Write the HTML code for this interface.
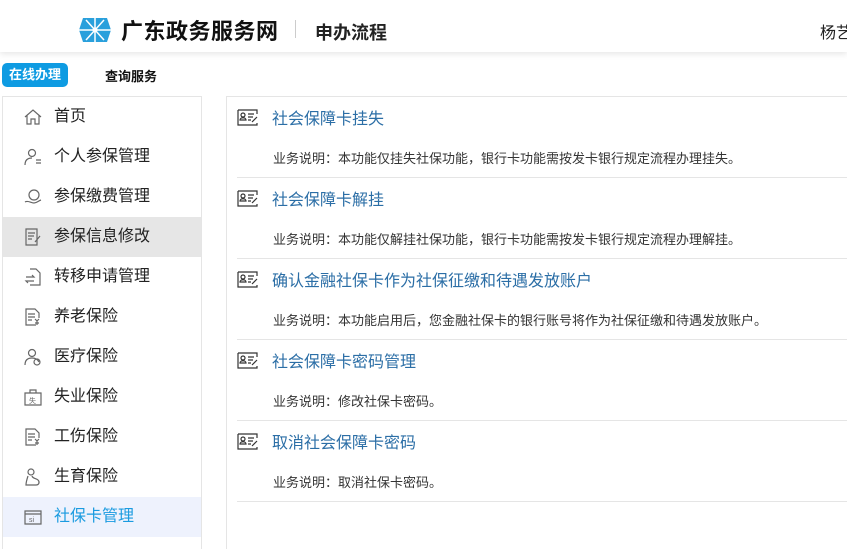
<!DOCTYPE html>
<html><head><meta charset="utf-8"><style>
*{margin:0;padding:0;box-sizing:border-box}
html,body{width:847px;height:549px;overflow:hidden}
body{background:#fff;font-family:"Liberation Sans","Noto Sans CJK SC",sans-serif;color:#333;position:relative}
.hdr{position:absolute;left:0;top:0;width:847px;height:52px;background:#fff;box-shadow:0 2px 6px rgba(0,0,0,.1)}
.t1{position:absolute;left:121px;top:14px;font-size:22px;font-weight:bold;color:#111;letter-spacing:0.5px}
.sep{position:absolute;left:295px;top:20px;width:1px;height:18px;background:#ccc}
.t2{position:absolute;left:315px;top:19px;font-size:18px;font-weight:bold;color:#222}
.user{position:absolute;left:820px;top:19px;width:27px;overflow:hidden;font-size:16px;color:#222;white-space:nowrap}
.tab{position:absolute;left:2px;top:63px;width:66px;height:24px;background:#0e9be2;border-radius:5px;color:#fff;font-size:13px;font-weight:bold;text-align:center;line-height:24px}
.tab2{position:absolute;left:105px;top:66px;font-size:13px;font-weight:bold;color:#111}
.side{position:absolute;left:2px;top:96px;width:200px;height:453px;border:1px solid #e5e5e5;border-bottom:none}
.it{position:absolute;left:0;width:198px;height:40px;font-size:16px;color:#222;line-height:40px;padding-left:51px}
.it svg{position:absolute;left:21px;top:11px}
.main{position:absolute;left:226px;top:96px;width:621px;height:453px;border:1px solid #e5e5e5;border-right:none;border-bottom:none;overflow:hidden}
.row{position:absolute;left:10px;width:620px;height:81px;border-bottom:1px solid #e5e5e5}
.row svg{position:absolute;left:0;top:11px}
.row .tt{position:absolute;left:35px;top:8px;font-size:16px;color:#2b6ea6;white-space:nowrap}
.row .ds{position:absolute;left:36px;top:51px;font-size:13px;color:#333;white-space:nowrap}
</style></head><body>
<div class="hdr">
<svg style="position:absolute;left:79px;top:18px" width="32" height="24" viewBox="0 0 32 24"><polygon points="4,0 28,0 32,12 28,24 4,24 0,12" fill="#2aa0dc"/><g stroke="#fff" stroke-width="1.5"><line x1="16" y1="0" x2="16" y2="24"/><line x1="0" y1="12" x2="32" y2="12"/><line x1="7" y1="2" x2="25" y2="22"/><line x1="25" y1="2" x2="7" y2="22"/></g><circle cx="16" cy="12" r="2.5" fill="#fff"/></svg>
<div class="t1">广东政务服务网</div><div class="sep"></div><div class="t2">申办流程</div>
<div class="user">杨艺</div>
</div>
<div class="tab">在线办理</div><div class="tab2">查询服务</div>
<div class="side">
<div class="it" style="top:0"><svg width="18" height="18" viewBox="0 0 18 18" fill="none" stroke="#666" stroke-width="1.2"><path d="M1 9L9 2l8 7M3 7v9h4v-5h4v5h4V7"/></svg>首页</div>
<div class="it" style="top:40px"><svg width="18" height="18" viewBox="0 0 18 18" fill="none" stroke="#666" stroke-width="1.2"><circle cx="8" cy="5" r="3.5"/><path d="M1 17c0-5 3-7 7-7M12 12h5M12 15h5"/></svg>个人参保管理</div>
<div class="it" style="top:80px"><svg width="18" height="18" viewBox="0 0 18 18" fill="none" stroke="#666" stroke-width="1.2"><circle cx="10" cy="7" r="5"/><path d="M1 14c3-2 6 1 9 1s4-2 7-3"/></svg>参保缴费管理</div>
<div class="it" style="top:120px;background:#e6e6e6"><svg width="18" height="18" viewBox="0 0 18 18" fill="none" stroke="#666" stroke-width="1.2"><path d="M2 1h11v16H2zM4 5h7M4 8h6M4 11h4M11 14l5-6"/></svg>参保信息修改</div>
<div class="it" style="top:160px"><svg width="18" height="18" viewBox="0 0 18 18" fill="none" stroke="#666" stroke-width="1.2"><path d="M6 1h6l4 4v12H6M2 9h8l-2-2M10 13H2l2 2"/></svg>转移申请管理</div>
<div class="it" style="top:200px"><svg width="18" height="18" viewBox="0 0 18 18" fill="none" stroke="#666" stroke-width="1.2"><path d="M12 17H2V1h9l4 4v5M4 6h7M4 9h7M4 12h4M11 11l2 2 2-2M13 13v4M11 15h4"/></svg>养老保险</div>
<div class="it" style="top:240px"><svg width="18" height="18" viewBox="0 0 18 18" fill="none" stroke="#666" stroke-width="1.2"><circle cx="8" cy="5" r="3.5"/><path d="M1 17c0-5 3-7 7-7s6 2 7 4"/><circle cx="13" cy="14" r="3"/></svg>医疗保险</div>
<div class="it" style="top:280px"><svg width="18" height="18" viewBox="0 0 18 18" fill="none" stroke="#666" stroke-width="1.2"><path d="M1 5h16v12H1zM6 5V2h6v3"/><text x="5" y="15" font-size="7" fill="#666" stroke="none">失</text></svg>失业保险</div>
<div class="it" style="top:320px"><svg width="18" height="18" viewBox="0 0 18 18" fill="none" stroke="#666" stroke-width="1.2"><path d="M12 17H2V1h9l4 4v5M4 6h7M4 9h7M4 12h4M11 11l2 2 2-2M13 13v4M11 15h4"/></svg>工伤保险</div>
<div class="it" style="top:360px"><svg width="18" height="18" viewBox="0 0 18 18" fill="none" stroke="#666" stroke-width="1.2"><circle cx="7" cy="4" r="3"/><path d="M4 8c-1 3-2 6-2 9h10c3 0 4-3 2-5s-5-1-6-4"/></svg>生育保险</div>
<div class="it" style="top:400px;background:#eef2fd;color:#1a9be0"><svg width="18" height="18" viewBox="0 0 18 18" fill="none" stroke="#666" stroke-width="1.2"><path d="M1 3h16v13H1zM1 6h16"/><text x="5" y="14" font-size="7" fill="#666" stroke="none">si</text></svg>社保卡管理</div>
</div>
<div class="main">
<div class="row" style="top:0"><svg width="22" height="18" viewBox="0 0 22 18" fill="none" stroke="#333" stroke-width="1.2"><path d="M1 2h19v4M20 15v2H1V2"/><circle cx="6" cy="7" r="2"/><path d="M3 12c0-3 6-3 6 0zM11 6h6M11 9h5M11 12h3M15 14l5-5"/></svg><div class="tt">社会保障卡挂失</div><div class="ds">业务说明：本功能仅挂失社保功能，银行卡功能需按发卡银行规定流程办理挂失。</div></div>
<div class="row" style="top:81px"><svg width="22" height="18" viewBox="0 0 22 18" fill="none" stroke="#333" stroke-width="1.2"><path d="M1 2h19v4M20 15v2H1V2"/><circle cx="6" cy="7" r="2"/><path d="M3 12c0-3 6-3 6 0zM11 6h6M11 9h5M11 12h3M15 14l5-5"/></svg><div class="tt">社会保障卡解挂</div><div class="ds">业务说明：本功能仅解挂社保功能，银行卡功能需按发卡银行规定流程办理解挂。</div></div>
<div class="row" style="top:162px"><svg width="22" height="18" viewBox="0 0 22 18" fill="none" stroke="#333" stroke-width="1.2"><path d="M1 2h19v4M20 15v2H1V2"/><circle cx="6" cy="7" r="2"/><path d="M3 12c0-3 6-3 6 0zM11 6h6M11 9h5M11 12h3M15 14l5-5"/></svg><div class="tt">确认金融社保卡作为社保征缴和待遇发放账户</div><div class="ds">业务说明：本功能启用后，您金融社保卡的银行账号将作为社保征缴和待遇发放账户。</div></div>
<div class="row" style="top:243px"><svg width="22" height="18" viewBox="0 0 22 18" fill="none" stroke="#333" stroke-width="1.2"><path d="M1 2h19v4M20 15v2H1V2"/><circle cx="6" cy="7" r="2"/><path d="M3 12c0-3 6-3 6 0zM11 6h6M11 9h5M11 12h3M15 14l5-5"/></svg><div class="tt">社会保障卡密码管理</div><div class="ds">业务说明：修改社保卡密码。</div></div>
<div class="row" style="top:324px"><svg width="22" height="18" viewBox="0 0 22 18" fill="none" stroke="#333" stroke-width="1.2"><path d="M1 2h19v4M20 15v2H1V2"/><circle cx="6" cy="7" r="2"/><path d="M3 12c0-3 6-3 6 0zM11 6h6M11 9h5M11 12h3M15 14l5-5"/></svg><div class="tt">取消社会保障卡密码</div><div class="ds">业务说明：取消社保卡密码。</div></div>
</div>
</body></html>
